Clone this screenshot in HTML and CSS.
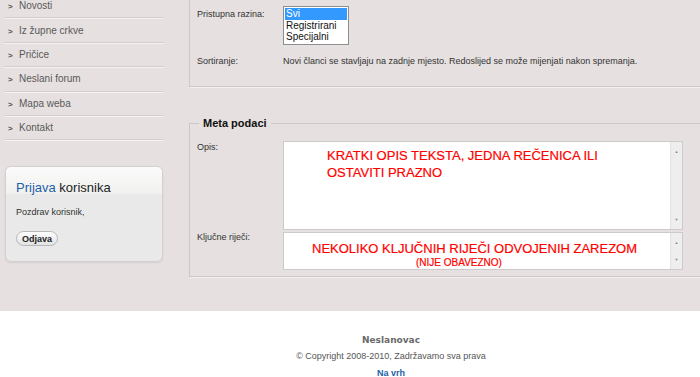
FILE: index.html
```html
<!DOCTYPE html>
<html lang="hr">
<head>
    <meta charset="UTF-8">
    <meta name="viewport" content="width=device-width, initial-scale=1.0">
    <title>Neslanovac - Uredi članak</title>
    <link rel="stylesheet" href="styles.css">
</head>
<body>
    <div class="page">
        <div class="layout">
            <aside class="sidebar">
                <ul class="menu">
                    <li><a href="#">Novosti</a></li>
                    <li><a href="#">Iz župne crkve</a></li>
                    <li><a href="#">Pričice</a></li>
                    <li><a href="#">Neslani forum</a></li>
                    <li><a href="#">Mapa weba</a></li>
                    <li><a href="#">Kontakt</a></li>
                </ul>

                <div class="login-box">
                    <div class="login-head">
                        <h3 class="login-title"><span class="accent">Prijava</span> korisnika</h3>
                    </div>
                    <p class="login-text">Pozdrav korisnik,</p>
                    <button class="btn">Odjava</button>
                </div>
            </aside>

            <main class="content">
                <fieldset class="group group-first">
                    <div class="row">
                        <span class="label">Pristupna razina:</span>
                        <ul class="listbox">
                            <li class="selected">Svi</li>
                            <li>Registrirani</li>
                            <li>Specijalni</li>
                        </ul>
                    </div>
                    <div class="row row-sort">
                        <span class="label">Sortiranje:</span>
                        <span class="value">Novi članci se stavljaju na zadnje mjesto. Redoslijed se može mijenjati nakon spremanja.</span>
                    </div>
                </fieldset>

                <fieldset class="group group-meta">
                    <legend>Meta podaci</legend>
                    <div class="row">
                        <span class="label">Opis:</span>
                        <div class="textbox textbox-tall">
                            <div class="textbox-text desc">KRATKI OPIS TEKSTA, JEDNA REČENICA ILI<br>OSTAVITI PRAZNO</div>
                            <div class="scrollbar"><span>&#9650;</span><span>&#9660;</span></div>
                        </div>
                    </div>
                    <div class="row row-keys">
                        <span class="label">Ključne riječi:</span>
                        <div class="textbox textbox-short">
                            <div class="textbox-text keys">
                                <span class="keys-main">NEKOLIKO KLJUČNIH RIJEČI ODVOJENIH ZAREZOM</span>
                                <span class="keys-note">(NIJE OBAVEZNO)</span>
                            </div>
                            <div class="scrollbar"><span>&#9650;</span><span>&#9660;</span></div>
                        </div>
                    </div>
                </fieldset>
            </main>
        </div>

        <footer class="footer">
            <div class="footer-inner">
                <div class="brand">Neslanovac</div>
                <div class="copyright">&copy; Copyright 2008-2010, Zadržavamo sva prava</div>
                <a class="top-link" href="#">Na vrh</a>
            </div>
        </footer>
    </div>
</body>
</html>
```

FILE: styles.css
```css
html, body {
    margin: 0;
    padding: 0;
    overflow: hidden;
}
body {
    font-family: "Liberation Sans", Arial, sans-serif;
    background-color: #e6e0e0;
    color: #333;
}
.layout {
    display: flex;
    align-items: flex-start;
}

/* sidebar */
.sidebar {
    width: 158px;
    margin-left: 5px;
    margin-top: -6px;
    flex-shrink: 0;
}
.menu {
    list-style: none;
    margin: 0;
    padding: 0;
}
.menu li {
    height: 23.4px;
    border-bottom: 1px solid #d2cece;
    box-shadow: 0 1px 0 #f4f2f2;
    display: flex;
    align-items: center;
}
.menu a {
    color: #5a5a5a;
    text-decoration: none;
    font-size: 10px;
    padding-left: 3px;
}
.menu a::before {
    content: ">";
    display: inline-block;
    width: 11px;
    font-size: 8px;
    font-weight: bold;
    color: #555;
}
.login-box {
    margin-top: 26px;
    height: 94px;
    border: 1px solid #d3d0d0;
    border-radius: 6px;
    background-color: #e9e9e9;
    box-shadow: 0 1px 2px rgba(0, 0, 0, 0.08);
    overflow: hidden;
}
.login-head {
    height: 27px;
    padding: 0 10px;
    background: linear-gradient(#fbfbfb, #f0f0ee);
    display: flex;
    align-items: flex-end;
}
.login-title {
    margin: 0;
    font-size: 13px;
    font-weight: normal;
    color: #222;
    line-height: 15px;
    position: relative;
    top: 1px;
}
.accent {
    color: #1f5fa8;
}
.login-text {
    margin: 13px 10px 0;
    font-size: 9px;
    color: #333;
}
.btn {
    margin: 14px 0 0 10px;
    padding: 0 5px;
    height: 15px;
    font-family: inherit;
    font-size: 9px;
    font-weight: bold;
    color: #222;
    background: linear-gradient(#fdfdfd, #e2e2e2);
    border: 1px solid #b8b8b8;
    border-radius: 8px;
}

/* main content */
.content {
    margin-left: 26px;
    width: 600px;
    flex-shrink: 0;
}
.group {
    margin: 0;
    padding: 0 0 0 7px;
    border: 1px solid #cdc7c7;
    box-shadow: 1px 1px 0 #f3f0f0;
    min-width: 0;
}
.group-first {
    border-top: 0;
    padding-top: 6px;
    padding-bottom: 19px;
}
.group-meta {
    margin-top: 30px;
    padding-top: 12px;
    padding-bottom: 6px;
}
.group legend {
    font-size: 11px;
    font-weight: bold;
    color: #111;
    margin-left: 2px;
    padding: 0 4px;
}
.row {
    display: flex;
    align-items: flex-start;
    font-size: 9px;
    line-height: 11px;
}
.label {
    width: 86px;
    flex-shrink: 0;
    color: #333;
}
.row-sort {
    margin-top: 11px;
}
.row:first-child .label {
    margin-top: 3px;
}
.group-meta .row:first-of-type .label {
    margin-top: 1px;
}
.row-keys {
    margin-top: 2px;
}
.value {
    color: #333;
}
.listbox {
    list-style: none;
    margin: 0;
    padding: 1px;
    width: 62px;
    height: 35px;
    background: #fff;
    border: 1px solid #8e8e8e;
    font-size: 10px;
    line-height: 11.5px;
    color: #111;
}
.listbox li {
    padding-left: 1px;
}
.listbox .selected {
    background: #3399ff;
    color: #fff;
}
.textbox {
    width: 398px;
    background: #fff;
    border: 1px solid #cccaca;
    display: flex;
}
.textbox-tall {
    height: 87px;
}
.textbox-short {
    height: 36px;
}
.textbox-text {
    flex: 1;
    color: #ff0000;
    -webkit-text-stroke: 0.2px #ff0000;
}
.desc {
    font-size: 13px;
    line-height: 16.5px;
    padding: 6px 0 0 43px;
}
.keys {
    display: flex;
    flex-direction: column;
    padding-top: 8px;
}
.keys-main {
    font-size: 13px;
    line-height: 15px;
    padding-left: 28px;
}
.keys-note {
    font-size: 10px;
    line-height: 14px;
    padding-left: 132px;
}
.scrollbar {
    width: 11px;
    background: #eeeeee;
    border-left: 1px solid #e2e2e2;
    display: flex;
    flex-direction: column;
    justify-content: space-between;
    align-items: center;
    font-size: 4px;
    color: #888;
    padding: 4px 0;
}

/* footer */
.footer {
    margin-top: 34px;
    background: #fff;
    height: 80px;
}
.footer-inner {
    margin-left: 82px;
    padding-top: 22px;
    text-align: center;
    font-size: 9px;
    line-height: 15px;
}
.brand {
    font-family: "DejaVu Sans", sans-serif;
    font-weight: bold;
    font-size: 9px;
    color: #6a6a6a;
    margin-bottom: 1px;
}
.copyright {
    color: #555;
}
.top-link {
    display: inline-block;
    margin-top: 2px;
    color: #1f5fa8;
    font-weight: bold;
    text-decoration: none;
}
```
